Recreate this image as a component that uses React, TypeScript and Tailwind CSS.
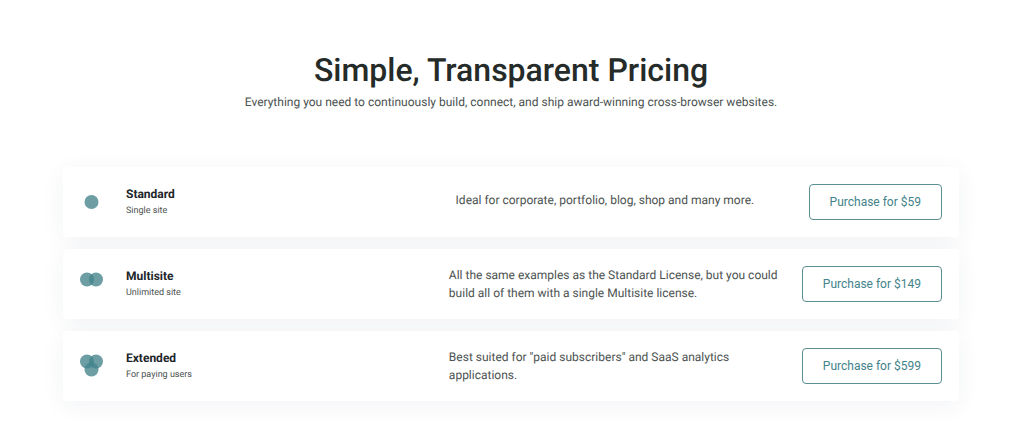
type Plan = {
  name: string;
  note: string;
  text: string;
  price: string;
  dots: [number, number][];
};

const plans: Plan[] = [
  {
    name: "Standard",
    note: "Single site",
    text: "Ideal for corporate, portfolio, blog, shop and many more.",
    price: "$59",
    dots: [[11.5, 12]],
  },
  {
    name: "Multisite",
    note: "Unlimited site",
    text: "All the same examples as the Standard License, but you could build all of them with a single Multisite license.",
    price: "$149",
    dots: [[7, 7.5], [16, 7.5]],
  },
  {
    name: "Extended",
    note: "For paying users",
    text: 'Best suited for "paid subscribers" and SaaS analytics applications.',
    price: "$599",
    dots: [[7, 7.5], [16, 7.5], [11.5, 15.5]],
  },
];

function PlanRow({ plan }: { plan: Plan }) {
  return (
    <li className="flex items-center rounded-sm bg-white p-[17px] shadow-[0_5px_24px_rgba(30,50,80,0.06)]">
      <svg viewBox="0 0 24 24" className="mr-[22px] size-6 shrink-0 text-[#43838a]" fill="currentColor" aria-hidden="true">
        {plan.dots.map(([x, y]) => (
          <circle key={`${x}-${y}`} cx={x} cy={y} r="7" fillOpacity="0.78" />
        ))}
      </svg>
      <div className="min-w-0 flex-1">
        <h2 className="text-[12px] leading-[18px] font-bold text-[#212529]">{plan.name}</h2>
        <p className="text-[9px] leading-4 text-[#4b5250]">{plan.note}</p>
      </div>
      <p className="mr-[23px] min-h-[22px] w-[330px] text-[12px] leading-[18px] text-[#4b5250]">{plan.text}</p>
      <button type="button" className="shrink-0 rounded border border-[#5b8f92] px-5 py-2 text-[12px] leading-[18px] text-[#43838a]">
        Purchase for {plan.price}
      </button>
    </li>
  );
}

export default function App() {
  return (
    <main className="bg-white px-4 pt-[50px] pb-11 font-[Roboto,sans-serif] [text-rendering:geometricPrecision]">
      <header className="pr-[2px] text-center">
        <h1 className="text-[32px] leading-10 font-medium text-[#252b29]">Simple, Transparent Pricing</h1>
        <p className="mt-[3px] text-[12px] leading-[18px] text-[#4b5250]">
          Everything you need to continuously build, connect, and ship award-winning cross-browser websites.
        </p>
      </header>
      <div className="pr-[2px]">
        <ul className="mx-auto mt-14 flex max-w-4xl flex-col gap-3">
          {plans.map((plan) => (
            <PlanRow key={plan.name} plan={plan} />
          ))}
        </ul>
      </div>
    </main>
  );
}
